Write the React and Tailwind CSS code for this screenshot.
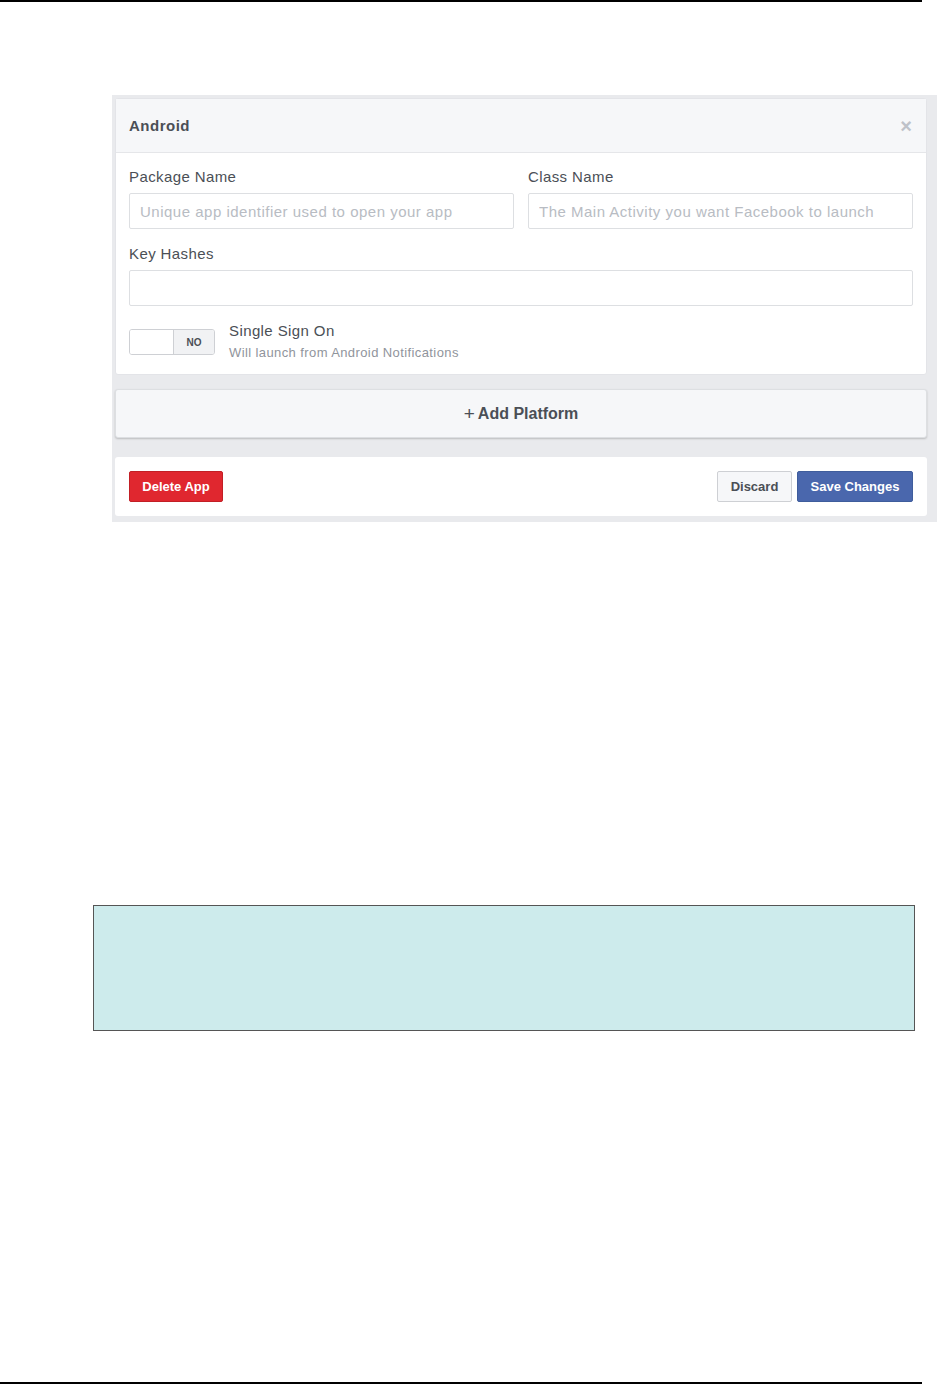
const Field = ({ label, placeholder }) => (
  <div className="flex flex-col flex-1">
    <label className="text-[15px] leading-[18px] tracking-[0.4px] text-[#4b4f56]">{label}</label>
    <input
      type="text"
      placeholder={placeholder}
      className="mt-[7px] h-[36px] w-full rounded-[2px] border border-[#dddfe2] bg-white px-[10px] text-[15px] tracking-[0.5px] text-[#1d2129] placeholder:text-[#b8bcc3] focus:outline-none"
    />
  </div>
);

const App = () => {
  return (
    <div
      className="relative flex h-[1384px] w-[937px] flex-col bg-white"
      style={{ fontFamily: '"Liberation Sans", Arial, sans-serif' }}
    >
      <div className="h-[2px] w-[922px] bg-black" />

      <div className="mt-[93px] ml-[112px] flex w-[825px] flex-col bg-[#e9eaed] pt-[3px] pr-[10px] pb-[6px] pl-[3px]">
        {/* platform card */}
        <div className="rounded-[3px] border border-[#e3e4e8] bg-white">
          <div className="flex h-[54px] items-center justify-between border-b border-[#e5e6e9] bg-[#f6f7f9] px-[13px]">
            <span className="mt-[1px] text-[15px] font-bold tracking-[0.5px] text-[#4b4f56]">Android</span>
            <span className="mr-[1px] text-[20px] leading-none font-bold text-[#bec2c9]">×</span>
          </div>

          <div className="flex flex-col px-[13px] pt-[15px] pb-[13px]">
            <div className="flex gap-[14px]">
              <Field label="Package Name" placeholder="Unique app identifier used to open your app" />
              <Field label="Class Name" placeholder="The Main Activity you want Facebook to launch" />
            </div>

            <div className="mt-[16px]">
              <Field label="Key Hashes" placeholder="" />
            </div>

            <div className="mt-[16px] flex items-start gap-[14px]">
              <div className="mt-[7px] flex h-[26px] w-[86px] overflow-hidden rounded-[3px] border border-[#ced0d4]">
                <div className="w-[44px] border-r border-[#ced0d4] bg-white" />
                <div className="flex flex-1 items-center justify-center bg-[#f1f2f4] text-[10px] font-bold text-[#4b4f56]">
                  NO
                </div>
              </div>
              <div className="flex flex-col">
                <span className="text-[15px] leading-[18px] tracking-[0.4px] text-[#4b4f56]">Single Sign On</span>
                <span className="mt-[5px] text-[13px] leading-[16px] tracking-[0.4px] text-[#90949c]">
                  Will launch from Android Notifications
                </span>
              </div>
            </div>
          </div>
        </div>

        {/* add platform */}
        <button className="mt-[14px] flex h-[49px] items-center justify-center gap-[3px] rounded-[3px] border border-[#dddfe2] bg-[#f6f7f9] text-[16px] font-bold text-[#4b4f56] shadow-[0_1px_2px_rgba(0,0,0,0.2)]">
          <span className="text-[19px] font-normal leading-none">+</span>
          Add Platform
        </button>

        {/* footer */}
        <div className="mt-[19px] flex h-[59px] items-center justify-between rounded-[3px] bg-white px-[14px]">
          <button className="h-[31px] w-[94px] rounded-[2px] border border-[#c21f25] bg-[#e0272f] text-[13px] font-bold text-white">
            Delete App
          </button>
          <div className="flex gap-[5px]">
            <button className="h-[31px] w-[75px] rounded-[2px] border border-[#ced0d4] bg-[#f6f7f9] text-[13px] font-bold text-[#4b4f56]">
              Discard
            </button>
            <button className="h-[31px] w-[116px] rounded-[2px] border border-[#3f5d9c] bg-[#4a67ad] text-[13px] font-bold text-white">
              Save Changes
            </button>
          </div>
        </div>
      </div>

      <div className="mt-[383px] ml-[93px] h-[126px] w-[822px] border border-[#555555] bg-[#cdebec]" />

      <div className="absolute bottom-0 left-0 h-[2px] w-[922px] bg-black" />
    </div>
  );
};

export default App;
